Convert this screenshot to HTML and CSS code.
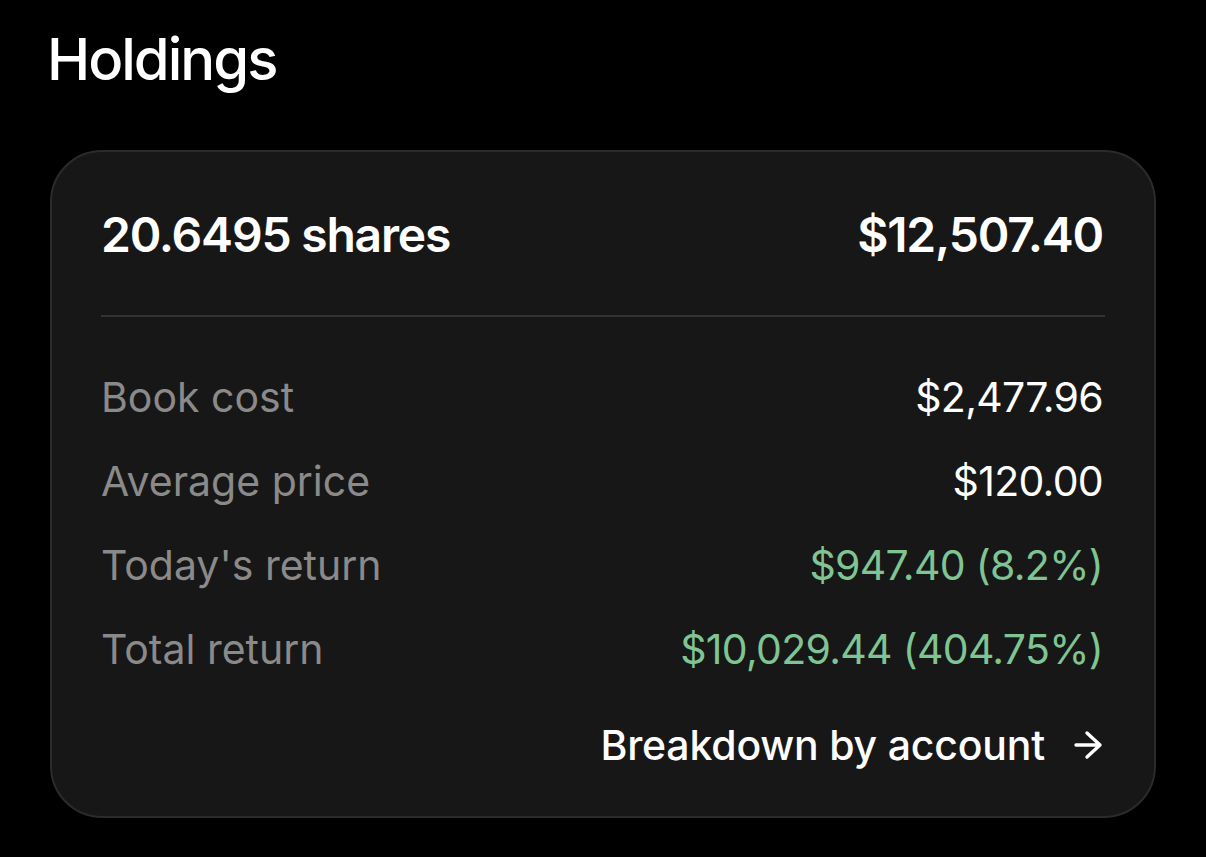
FILE: index.html
```html
<!DOCTYPE html>
<html lang="en">
<head>
<meta charset="utf-8">
<title>Holdings</title>
<link rel="stylesheet" href="styles.css">
</head>
<body>
<main class="page">
  <h1 class="title">Holdings</h1>
  <section class="card">
    <div class="summary">
      <span>20.6495 shares</span>
      <span>$12,507.40</span>
    </div>
    <hr class="divider">
    <dl class="rows">
      <div class="row"><dt>Book cost</dt><dd>$2,477.96</dd></div>
      <div class="row"><dt>Average price</dt><dd>$120.00</dd></div>
      <div class="row"><dt>Today's return</dt><dd class="pos">$947.40 (8.2%)</dd></div>
      <div class="row"><dt>Total return</dt><dd class="pos">$10,029.44 (404.75%)</dd></div>
    </dl>
    <a class="link" href="#">Breakdown by account
      <svg class="arrow" width="30" height="30" viewBox="0 0 30 30" aria-hidden="true"><path d="M3 15H27M14 3L27 15L14 27" fill="none" stroke="#fff" stroke-width="3.4" stroke-linecap="round" stroke-linejoin="round"/></svg>
    </a>
  </section>
</main>
</body>
</html>
```
FILE: styles.css
```css
* { box-sizing: border-box; }
html, body { margin: 0; padding: 0; background: #000; }
body { font-family: Inter, "Open Sans", sans-serif; color: #fff; }
.page { padding: 0 50px; }
.title {
  margin: 0 0 0 -3px;
  padding-top: 24px;
  font-size: 58px;
  font-weight: 500;
  line-height: 70px;
  letter-spacing: -2px;
  height: 150px;
}
.card {
  width: 1106px;
  height: 668px;
  background: #171717;
  border: 2px solid #2b2b2b;
  border-radius: 52px;
  padding: 54px 51px 0 49px;
}
.summary {
  display: flex;
  justify-content: space-between;
  font-size: 48px;
  font-weight: 600;
  line-height: 58px;
  letter-spacing: -1.2px;
}
.divider {
  border: 0;
  height: 2px;
  background: #333;
  margin: 51px -2px 38px 0;
}
.rows { margin: 0; }
.row {
  display: flex;
  justify-content: space-between;
  font-size: 41px;
  line-height: 84px;
}
.row dt { color: #8a8a8a; margin: 0; }
.row dd { margin: 0; color: #fff; letter-spacing: -0.7px; }
.row dd.pos { color: #7fc493; }
.link {
  display: flex;
  justify-content: flex-end;
  align-items: center;
  gap: 28px;
  margin-top: 12px;
  font-size: 41px;
  line-height: 84px;
  font-weight: 500;
  letter-spacing: -0.2px;
  color: #fff;
  text-decoration: none;
}
.arrow { display: block; margin-top: 0; }
```
